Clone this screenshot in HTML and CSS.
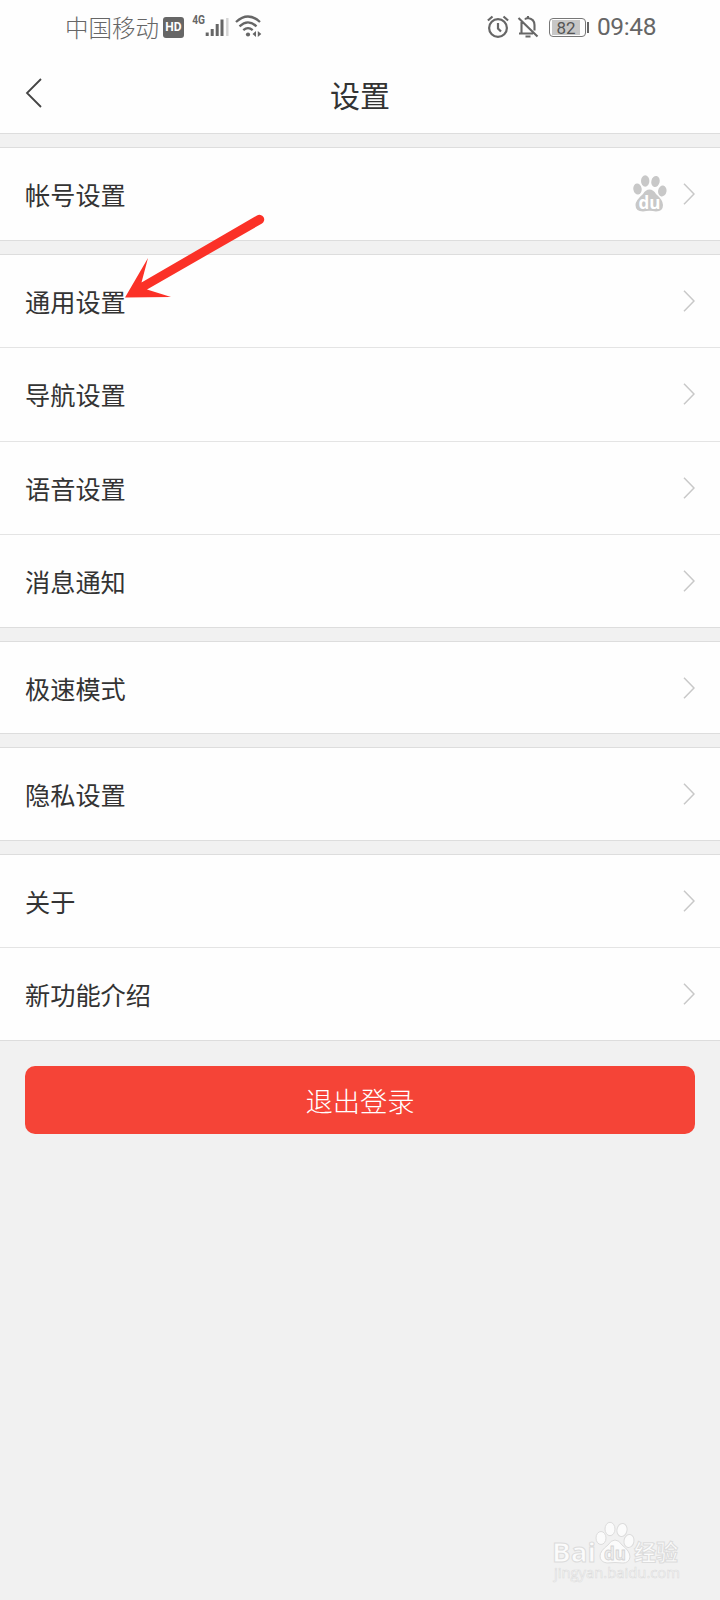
FILE: index.html
```html
<!DOCTYPE html>
<html lang="zh-CN">
<head>
<meta charset="utf-8">
<title>设置</title>
<link rel="stylesheet" href="styles.css">
</head>
<body>
<div class="screen">
  <div class="status">
    <div class="status-left">
      <span class="carrier">中国移动</span>
      <span class="hd">HD</span>
      <span class="net">4G</span>
      <svg class="signal" width="24" height="20" viewBox="0 0 24 20"><path d="M2.2 14.5V18M7.2 11V18M12.2 6V18M17 1.5V18" stroke="#666" stroke-width="3" stroke-linecap="butt"/><path d="M22.3 0V18" stroke="#d5d5d5" stroke-width="2.4"/></svg>
      <svg class="wifi" width="28" height="24" viewBox="0 0 28 24" fill="none" stroke="#666" stroke-width="2.3"><path d="M1 7Q13 -4 25 7M4.5 11.3Q13 3.5 21.5 11.3M8.3 15.2Q13 11 17.7 15.2"/><circle cx="13" cy="19.5" r="2.1" fill="#666" stroke="none"/><path d="M21 16v6l-3.5-3zM22.8 16v6l3.5-3z" fill="#666" stroke="none"/></svg>
    </div>
    <div class="status-right">
      <svg width="22" height="24" viewBox="0 0 22 24" fill="none" stroke="#666" stroke-width="2.2"><circle cx="11" cy="13" r="8.9"/><path d="M11 8v5.5l3 3M.9 5.5L5.5 1.5M21.1 5.5L16.500 1.500"/></svg>
      <svg class="bell" width="22" height="24" viewBox="0 0 22 24" fill="none" stroke="#666" stroke-width="2.1"><path d="M1.500 3L20.500 21.500M4.500 7v11.500H16M2 18.500H5M8 4.500Q9 3 11 3Q17.500 4 17.500 10V15.500M11 1V3M8.500 21.500H13.500"/></svg>
      <span class="battery"><span class="charge">82</span></span>
      <span class="battery-cap"></span>
      <span class="clock">09:48</span>
    </div>
  </div>
  <header class="header">
    <svg class="back" width="18" height="30" viewBox="0 0 18 30"><path d="M16 1L2 15L16 29" fill="none" stroke="#444" stroke-width="1.8"/></svg>
    <h1 class="title">设置</h1>
  </header>
  <main class="list">
    <section class="group single">
      <div class="row"><span>帐号设置</span>
        <svg class="paw" width="34" height="38" viewBox="0 0 34 38" fill="#c8c8c8"><ellipse cx="4.500" cy="14" rx="4.200" ry="5.500" transform="rotate(-8 4.500 14)"/><ellipse cx="12.200" cy="6" rx="4.200" ry="5.700"/><ellipse cx="22.500" cy="6.500" rx="4.200" ry="5.600" transform="rotate(12 22.500 6.500)"/><ellipse cx="29.300" cy="16" rx="4.200" ry="5.500" transform="rotate(10 29.300 16)"/><path d="M16.500 14.500Q20.500 14.500 23 19Q30 25 30 30Q30 36.500 23 36.500Q16.500 35 10 36.500Q2.500 36.500 2.500 30Q2.500 25.500 10 19Q12.500 14.500 16.500 14.500Z"/><text class="paw-text" x="16.500" y="33.500" text-anchor="middle">du</text></svg>
        <svg class="chev" width="12" height="22" viewBox="0 0 12 22"><path d="M1 .7L11 11L1 21.300"/></svg></div>
    </section>
    <section class="group quad">
      <div class="row"><span>通用设置</span><svg class="chev" width="12" height="22" viewBox="0 0 12 22"><path d="M1 .7L11 11L1 21.300"/></svg></div>
      <div class="row"><span>导航设置</span><svg class="chev" width="12" height="22" viewBox="0 0 12 22"><path d="M1 .7L11 11L1 21.300"/></svg></div>
      <div class="row"><span>语音设置</span><svg class="chev" width="12" height="22" viewBox="0 0 12 22"><path d="M1 .7L11 11L1 21.300"/></svg></div>
      <div class="row"><span>消息通知</span><svg class="chev" width="12" height="22" viewBox="0 0 12 22"><path d="M1 .7L11 11L1 21.300"/></svg></div>
    </section>
    <section class="group short">
      <div class="row"><span>极速模式</span><svg class="chev" width="12" height="22" viewBox="0 0 12 22"><path d="M1 .7L11 11L1 21.300"/></svg></div>
    </section>
    <section class="group single">
      <div class="row"><span>隐私设置</span><svg class="chev" width="12" height="22" viewBox="0 0 12 22"><path d="M1 .7L11 11L1 21.300"/></svg></div>
    </section>
    <section class="group double">
      <div class="row"><span>关于</span><svg class="chev" width="12" height="22" viewBox="0 0 12 22"><path d="M1 .7L11 11L1 21.300"/></svg></div>
      <div class="row"><span>新功能介绍</span><svg class="chev" width="12" height="22" viewBox="0 0 12 22"><path d="M1 .7L11 11L1 21.300"/></svg></div>
    </section>
  </main>
  <button class="logout">退出登录</button>
  <svg class="arrow" width="150" height="90" viewBox="0 0 150 90"><path d="M5 83.500L28 44L21.500 68.500L137 1.500A4.700 4.700 0 0 1 142 9.500L27 75.500L51 83Z" fill="#fb3127"/></svg>
  <svg class="watermark" width="140" height="70" viewBox="0 0 140 70">
    <g fill="#fbfbfb" stroke="#dcdcdc" stroke-width="1">
      <text class="wm-brand" x="2" y="42" textLength="44" lengthAdjust="spacingAndGlyphs">Bai</text>
      <ellipse cx="51" cy="18" rx="5" ry="6.500"/><ellipse cx="60" cy="9" rx="5" ry="6.700"/><ellipse cx="72" cy="10" rx="5" ry="6.600" transform="rotate(12 72 10)"/><ellipse cx="79" cy="21" rx="5" ry="6.500" transform="rotate(10 79 21)"/>
      <path d="M65 20Q69 20 72 25Q80 31 80 37Q79 43 73 43Q65 42 57 43Q50 42 50 36Q50 31 58 25Q61 20 65 20Z"/>
      <text class="wm-cn" x="84" y="40" textLength="44" lengthAdjust="spacingAndGlyphs">经验</text>
      <text class="wm-url" x="4" y="58" textLength="126" lengthAdjust="spacingAndGlyphs">jingyan.baidu.com</text>
    </g>
    <text class="wm-du" x="65" y="40" text-anchor="middle">du</text>
  </svg>
</div>
</body>
</html>
```
FILE: styles.css
```css
* { box-sizing: border-box; }
body {
  margin: 0;
  background: #f1f1f1;
  color: #333;
  font-family: "Noto Sans CJK SC", sans-serif;
}
.screen { position: relative; height: 1600px; overflow: hidden; }
.status {
  display: flex;
  justify-content: space-between;
  height: 54px;
  padding: 0 64px 0 65px;
  background: #fefefe;
  color: #666;
}
.status-left, .status-right { display: flex; align-items: center; height: 54px; }
.carrier { font-size: 23.5px; line-height: 54px; font-weight: 300; }
.hd {
  width: 21px;
  height: 21px;
  margin-left: 4px;
  border-radius: 3px;
  background: #666;
  color: #fff;
  font: bold 12px/21px Roboto, sans-serif;
  text-align: center;
}
.net { margin: -14px 0 0 7px; font: bold 12px/14px Roboto, sans-serif; transform: scaleX(.85); }
.signal { margin-left: -1px; margin-top: 1px; }
.wifi { margin-left: 6px; }
.bell { margin-left: 8px; }
.battery {
  width: 37px;
  height: 19px;
  margin-left: 10px;
  padding: 1px 5px 1px 2px;
  border: 1px solid #777;
  border-radius: 4px;
}
.charge {
  display: block;
  height: 15px;
  background: #c7c7c7;
  color: #555;
  font: 17px/16px Roboto, sans-serif;
  text-align: center;
}
.battery-cap { width: 2px; height: 11px; margin-left: 1px; background: #666; }
.clock { margin-left: 8px; font: 24.5px/54px Roboto, sans-serif; letter-spacing: -.4px; }
.header {
  display: grid;
  grid-template-columns: 80px 1fr 80px;
  align-items: center;
  height: 80px;
  background: #fefefe;
  border-bottom: 1px solid #ddd;
}
.back { margin: -2px 0 0 25px; }
.title { margin: 0; font-size: 30px; line-height: 78px; font-weight: 400; text-align: center; }
.list { display: flex; flex-direction: column; gap: 13px; padding-top: 13px; }
.group {
  display: flex;
  flex-direction: column;
  background: #fefefe;
  border-top: 1px solid #ddd;
  border-bottom: 1px solid #ddd;
}
.single { height: 94px; }
.short { height: 93px; }
.double { height: 187px; }
.quad { height: 374px; }
.row {
  display: flex;
  flex: 1;
  align-items: center;
  padding: 0 25px;
  font-size: 25.2px;
  line-height: 38px;
}
.row + .row { border-top: 1px solid #e4e4e4; }
.row span { margin-right: auto; }
.chev { fill: none; stroke: #c8c8c8; stroke-width: 1.5; }
.paw { margin-right: 16px; }
.paw-text { fill: #fff; font: bold 17px "Open Sans", sans-serif; }
.logout {
  display: block;
  width: 670px;
  height: 68px;
  margin: 25px 0 0 25px;
  padding: 0;
  border: 0;
  border-radius: 10px;
  background: #f54437;
  color: #fff;
  font: 300 27.3px/68px "Noto Sans CJK SC", sans-serif;
}
.arrow { position: absolute; left: 120px; top: 214px; }
.watermark { position: absolute; left: 550px; top: 1520px; }
.wm-brand { font: bold 27px "Open Sans", sans-serif; }
.wm-cn { font: bold 22px "Noto Sans CJK SC", sans-serif; }
.wm-url { font: 15px "Open Sans", sans-serif; stroke-width: .6; }
.wm-du { font: bold 17px "Open Sans", sans-serif; fill: #eee; stroke: #d4d4d4; stroke-width: .8; }
```
